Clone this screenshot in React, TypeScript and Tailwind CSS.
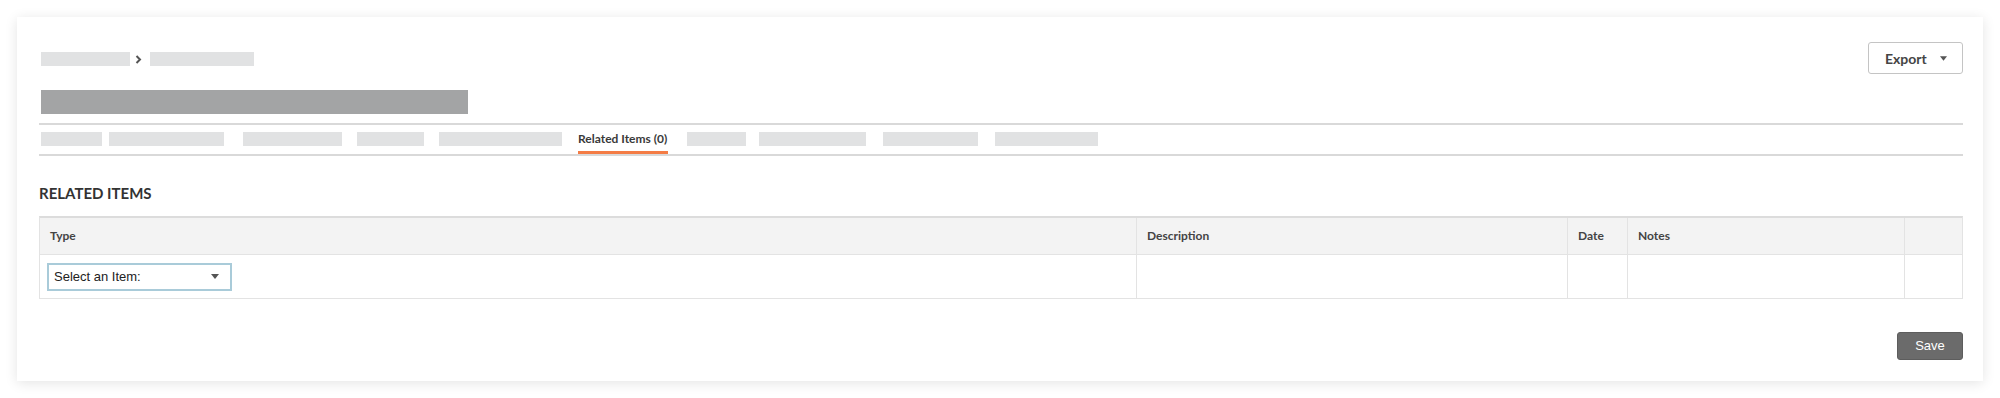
import React from 'react';

const tabs = [
    { w: 61, ml: 2 },
    { w: 115, ml: 7 },
    { w: 99, ml: 19 },
    { w: 67, ml: 15 },
    { w: 123, ml: 15 },
    { label: 'Related Items (0)', w: 90, ml: 16, active: true },
    { w: 59, ml: 19 },
    { w: 107, ml: 13 },
    { w: 95, ml: 17 },
    { w: 103, ml: 17 },
];

function Caret({ className }: { className?: string }) {
    return (
        <svg className={className} width="8" height="5" viewBox="0 0 8 5">
            <path d="M0 0 L8 0 L4 5 Z" fill="currentColor" />
        </svg>
    );
}

function Tabs() {
    return (
        <div>
            <div className="h-[2px] bg-[#d9d9d9]" />
            <div className="flex h-[29px]">
                {tabs.map((t, i) => (
                    <div
                        key={i}
                        className="flex flex-col pt-[7px]"
                        style={{ marginLeft: t.ml, width: t.w }}
                    >
                        {t.label ? (
                            <div className="h-[14px] flex items-center text-[12px] font-bold text-[#3a3a3a] whitespace-nowrap leading-none">
                                {t.label}
                            </div>
                        ) : (
                            <div className="h-[14px] bg-[#e1e2e3]" />
                        )}
                        <div className={`mt-[5px] h-[3px] ${t.active ? 'bg-[#f47c45]' : ''}`} />
                    </div>
                ))}
            </div>
            <div className="h-[2px] bg-[#d9d9d9]" />
        </div>
    );
}

function RelatedTable() {
    const cols = 'grid grid-cols-[1096px_431px_60px_277px_1fr]';
    const headers = ['Type', 'Description', 'Date', 'Notes', ''];

    return (
        <div className="border-t-2 border-[#dcdcdc] border-x border-b border-x-[#e3e3e3] border-b-[#e3e3e3]">
            {/* Header */}
            <div className={`${cols} h-[37px] bg-[#f3f3f3] border-b border-[#e3e3e3]`}>
                {headers.map((h, i) => (
                    <div
                        key={i}
                        className={`flex items-center px-[10px] text-[12px] font-bold text-[#444] ${i > 0 ? 'border-l border-[#e3e3e3]' : ''}`}
                    >
                        {h}
                    </div>
                ))}
            </div>
            {/* Row */}
            <div className={`${cols} h-[43px]`}>
                <div className="flex items-center pl-[7px]">
                    <div className="w-[185px] h-[28px] border-2 border-[#a9cbd9] bg-white flex items-center justify-between pl-[5px] pr-[11px] font-['Liberation_Sans',Arial,sans-serif] text-[13px] text-[#222]">
                        <span>Select an Item:</span>
                        <Caret className="text-[#555]" />
                    </div>
                </div>
                <div className="border-l border-[#e3e3e3]" />
                <div className="border-l border-[#e3e3e3]" />
                <div className="border-l border-[#e3e3e3]" />
                <div className="border-l border-[#e3e3e3]" />
            </div>
        </div>
    );
}

export default function App() {
    return (
        <div className="w-[2000px] h-[398px] bg-white pt-[17px] pl-[17px] font-['Lato','Open_Sans',sans-serif]">
            <div className="w-[1966px] h-[364px] bg-white shadow-[0_2px_12px_rgba(0,0,0,0.11)] pt-[25px] pl-[22px] pr-[20px] flex flex-col">
                {/* Header */}
                <div className="flex justify-between">
                    <div className="pl-[2px]">
                        <div className="mt-[10px] flex items-center h-[14px]">
                            <div className="w-[89px] h-[14px] bg-[#e1e2e3]" />
                            <svg className="ml-[5px]" width="7" height="9" viewBox="0 0 7 9">
                                <path d="M1.5 1 L5 4.5 L1.5 8" fill="none" stroke="#555" strokeWidth="2" />
                            </svg>
                            <div className="ml-[8px] w-[104px] h-[14px] bg-[#e1e2e3]" />
                        </div>
                        <div className="mt-[24px] w-[427px] h-[24px] bg-[#a3a4a5]" />
                    </div>
                    <button className="w-[95px] h-[32px] border border-[#c4c4c4] rounded-[3px] bg-white flex items-center justify-between pl-[16px] pr-[15px] text-[14px] font-bold text-[#454545]">
                        <span>Export</span>
                        <Caret className="text-[#555] w-[7px]" />
                    </button>
                </div>

                <div className="mt-[9px]">
                    <Tabs />
                </div>

                <h2 className="mt-[28px] text-[15px] leading-[18px] font-bold text-[#333]">RELATED ITEMS</h2>

                <div className="mt-[14px]">
                    <RelatedTable />
                </div>

                <div className="mt-[33px] flex justify-end">
                    <button className="w-[66px] h-[28px] bg-[#6b6b6b] border border-[#5d5d5d] rounded-[3px] text-white text-[13px] font-['Liberation_Sans',Arial,sans-serif]">
                        Save
                    </button>
                </div>
            </div>
        </div>
    );
}
